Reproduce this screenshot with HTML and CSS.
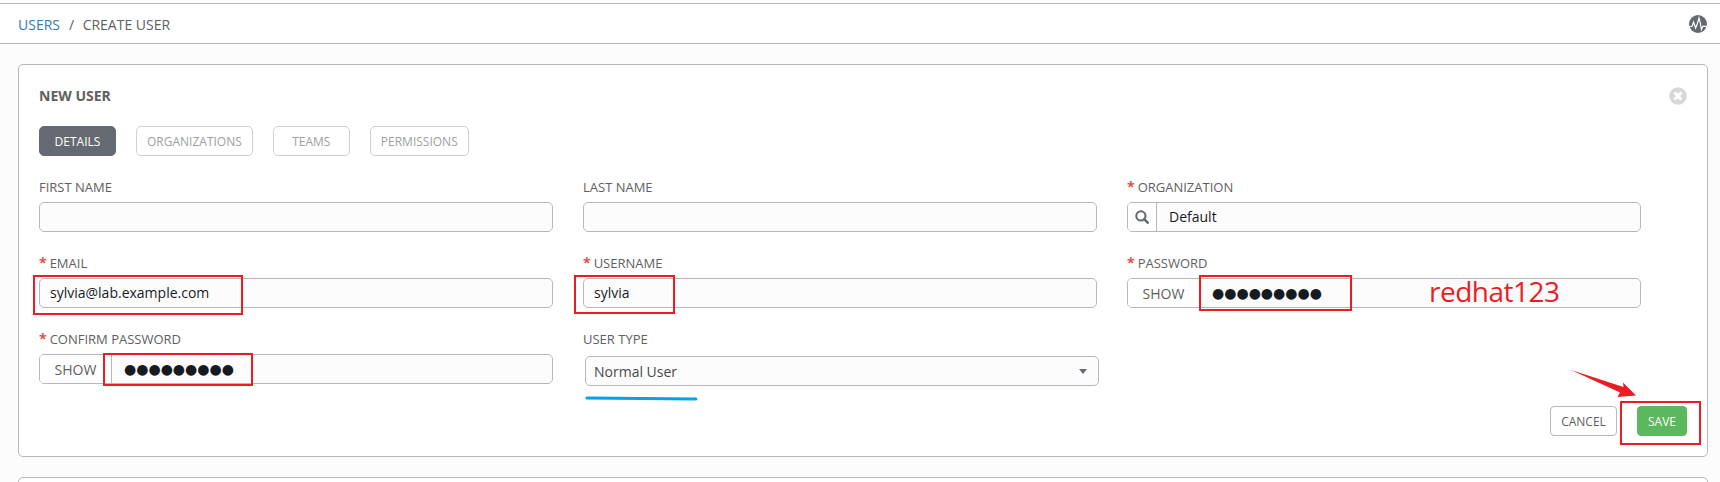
FILE: index.html
```html
<!DOCTYPE html>
<html lang="en">
<head>
<meta charset="utf-8">
<title>Create User</title>
<link rel="stylesheet" href="styles.css">
</head>
<body>
<header class="topbar">
  <nav class="crumbs"><a class="crumb-link">USERS</a><span class="crumb-sep">/</span><span>CREATE USER</span></nav>
  <svg class="activity" width="18" height="18" viewBox="0 0 18 18"><circle cx="9" cy="9" r="9" fill="#646972"/><path d="M0 11.5H3L4.6 7L6.6 13L8.4 8.5L10 3L11.4 8.5L12.4 14.5L13.8 11.3H18" fill="none" stroke="#fff" stroke-width="1.2"/></svg>
</header>
<main class="page">
  <section class="panel">
    <div class="panel-head">
      <h1 class="title">NEW USER</h1>
      <svg class="close" width="18" height="18" viewBox="0 0 18 18"><circle cx="9" cy="9" r="8.7" fill="#d7d7d7"/><path d="M5.5 5.5L12.5 12.5M12.5 5.5L5.5 12.5" stroke="#fff" stroke-width="3"/></svg>
    </div>
    <div class="tabs">
      <button class="tab active">DETAILS</button>
      <button class="tab">ORGANIZATIONS</button>
      <button class="tab">TEAMS</button>
      <button class="tab">PERMISSIONS</button>
    </div>
    <form class="form">
      <div class="field"><label class="label">FIRST NAME</label><div class="input"></div></div>
      <div class="field"><label class="label">LAST NAME</label><div class="input"></div></div>
      <div class="field"><label class="label"><b class="req">*</b>ORGANIZATION</label>
        <div class="input"><span class="addon search"><svg width="14" height="14" viewBox="0 0 14 14"><circle cx="5.9" cy="5.9" r="4.6" fill="none" stroke="#646972" stroke-width="2.1"/><path d="M9.2 9.2L12.7 12.7" stroke="#646972" stroke-width="2.5" stroke-linecap="round"/></svg></span><span class="value">Default</span></div></div>
      <div class="field"><label class="label"><b class="req">*</b>EMAIL</label><div class="input"><span class="value">sylvia@lab.example.com</span></div></div>
      <div class="field"><label class="label"><b class="req">*</b>USERNAME</label><div class="input"><span class="value">sylvia</span></div></div>
      <div class="field"><label class="label"><b class="req">*</b>PASSWORD</label><div class="input"><span class="addon show">SHOW</span><span class="value dots">●●●●●●●●●</span></div></div>
      <div class="field"><label class="label"><b class="req">*</b>CONFIRM PASSWORD</label><div class="input"><span class="addon show">SHOW</span><span class="value dots">●●●●●●●●●</span></div></div>
      <div class="field"><label class="label">USER TYPE</label><div class="input select"><span>Normal User</span><i class="caret"></i></div></div>
    </form>
    <div class="actions"><button class="btn">CANCEL</button><button class="btn save">SAVE</button></div>
  </section>
  <section class="panel next"></section>
</main>
<svg class="marks" width="1720" height="482" viewBox="0 0 1720 482">
  <g fill="none" stroke="#ed1c24" stroke-width="2">
    <rect x="34" y="276" width="208" height="38"/>
    <rect x="575" y="276" width="99" height="37"/>
    <rect x="1200" y="276" width="151" height="34"/>
    <rect x="104" y="354" width="148" height="31"/>
    <rect x="1621" y="402" width="79" height="42"/>
  </g>
  <path d="M587 398L696 399" stroke="#00a2e8" stroke-width="3" stroke-linecap="round"/>
  <path d="M1571 370L1623.500 387L1623 382.500L1636 395.500L1617.500 397L1620 392.500Z" fill="#ed1c24"/>
  <text class="note" x="1429" y="302" textLength="131">redhat123</text>
</svg>
</body>
</html>
```
FILE: styles.css
```css
* { box-sizing: border-box; }
body { margin: 0; height: 482px; overflow: hidden; padding-top: 3px; position: relative; background: #fff; color: #606060; font-family: "Open Sans", "Noto Sans", sans-serif; font-size: 14px; }
button { font-family: inherit; margin: 0; }
.topbar { display: flex; justify-content: space-between; align-items: center; height: 41px; padding: 0 13px 0 18px; border-top: 1px solid #b7b7b7; border-bottom: 1px solid #b7b7b7; background: #fff; }
.crumbs { display: flex; line-height: 20px; padding-top: 2px; }
.crumb-link { color: #337ab7; }
.crumb-sep { padding: 0 8.5px 0 9px; }
.activity { display: block; }
.page { height: 438px; padding: 20px 12px 0 18px; background: #fcfcfc; overflow: hidden; }
.panel { height: 393px; padding: 20px 20px 0; border: 1px solid #b7b7b7; border-radius: 5px; background: #fff; }
.next { margin-top: 20px; }
.panel-head { display: flex; justify-content: space-between; align-items: center; height: 22px; }
.title { margin: 0; font-size: 14px; line-height: 20px; font-weight: 700; }
.close { display: block; }
.tabs { display: flex; gap: 20px; margin-top: 19px; }
.tab { min-width: 77px; height: 30px; padding: 1px 10px 0; border: 1px solid #d0d0d0; border-radius: 5px; background: #fff; color: #a0a0a0; font-size: 12px; line-height: 27px; }
.tab.active { background: #646972; border-color: #646972; color: #fff; }
.form { display: grid; grid-template-columns: repeat(3, 514px); column-gap: 30px; grid-auto-rows: 76px; margin-top: 21px; }
.label { display: block; height: 20px; margin-bottom: 5px; font-size: 13px; line-height: 20px; }
.req { color: #d9534f; font-size: 14px; line-height: 16px; margin-right: 3px; }
.input { display: flex; align-items: center; height: 30px; border: 1px solid #b7b7b7; border-radius: 5px; background: #fcfcfc; color: #161b1f; overflow: hidden; }
.value { padding: 0 10px; line-height: 20px; }
.addon { display: flex; align-items: center; justify-content: center; height: 28px; background: #fff; border-right: 1px solid #b7b7b7; color: #606060; }
.search { width: 29px; }
.show { width: 72px; }
.search + .value { padding-left: 12px; }
.dots { font-family: "DejaVu Sans", sans-serif; font-size: 14px; padding-left: 12px; }
.select { margin: 7px -2px 0 2px; padding: 0 11px 0 8px; color: #484848; justify-content: space-between; }
.caret { border: 4px solid transparent; border-top: 5px solid #646972; border-bottom: 0; }
.actions { display: flex; justify-content: flex-end; gap: 20px; padding-top: 1px; }
.btn { height: 30px; width: 67px; padding: 0; border: 1px solid #b7b7b7; border-radius: 4px; background: #fff; color: #606060; font-size: 12px; }
.save { width: 50px; border-color: #5cb85c; background: #5cb85c; color: #fff; }
.marks { position: absolute; left: 0; top: 0; }
.note { font: 28px "Open Sans", sans-serif; fill: #ed1c24; }
```
